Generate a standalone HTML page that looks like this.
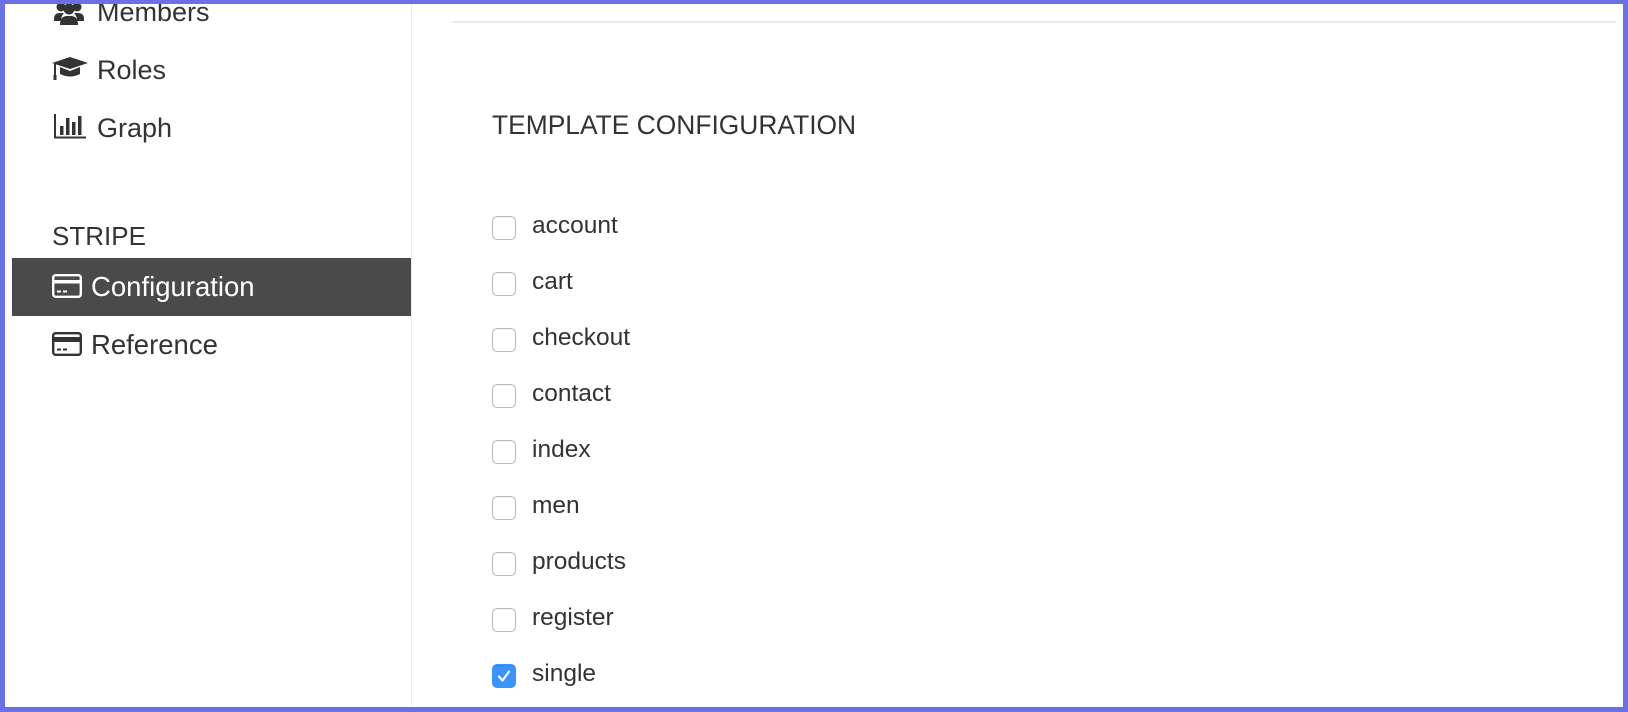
<!DOCTYPE html>
<html><head><meta charset="utf-8"><style>
html,body{margin:0;padding:0;}
body{width:1628px;height:712px;position:relative;overflow:hidden;background:#6a70e6;font-family:"Liberation Sans",Arial,sans-serif;color:#333;}
.page{position:absolute;left:5px;top:4px;right:5px;bottom:5px;background:#fff;overflow:hidden;}
.t{position:absolute;white-space:nowrap;line-height:1;}
.side{position:absolute;left:0;top:0;width:406px;height:100%;border-right:1px solid #ececec;}
.active{position:absolute;left:7px;top:254px;width:399px;height:58px;background:#4a4a4a;}
.cb{position:absolute;left:487px;width:22px;height:22px;border:1px solid #b9b9b9;border-radius:5px;background:#fff;box-shadow:inset 0 1px 1px rgba(0,0,0,.06);}
.cb.on{background:#3b93fb;border-color:#3b93fb;}
.lbl{position:absolute;left:527px;font-size:24.5px;line-height:1;}
</style></head><body>
<div class="page">
<div class="side"></div>
<div class="active"></div>
<svg style="position:absolute;left:49px;top:-3px" width="30" height="24" viewBox="0 0 30 24"><circle cx="7" cy="6" r="4.5" fill="#333"/><circle cx="23" cy="6" r="4.5" fill="#333"/><circle cx="15" cy="8" r="5.5" fill="#333"/><path d="M0 18q0-6 6-6h4q-3 3-3 8H0z" fill="#333"/><path d="M30 18q0-6-6-6h-4q3 3 3 8h7z" fill="#333"/><path d="M6 24q0-9 7-9h4q7 0 7 9z" fill="#333"/></svg>
<svg style="position:absolute;left:47px;top:52px" width="37" height="25" viewBox="0 0 37 25"><path d="M0 7L18 1 36 7 18 13z" fill="#333"/><path d="M8 11v7q10 5 20 0v-7l-10 4z" fill="#333"/><path d="M3 8v12" stroke="#333" stroke-width="2"/><rect x="1.5" y="19" width="3" height="5" fill="#333"/></svg>
<svg style="position:absolute;left:49px;top:110px" width="33" height="25" viewBox="0 0 33 25"><path d="M1 0v23.5h31" stroke="#333" stroke-width="2" fill="none"/><rect x="6" y="12" width="3.5" height="9" fill="#333"/><rect x="12" y="4" width="3.5" height="17" fill="#333"/><rect x="18" y="8" width="3.5" height="13" fill="#333"/><rect x="24" y="2" width="3.5" height="19" fill="#333"/></svg>
<svg style="position:absolute;left:47px;top:270px" width="30" height="24" viewBox="0 0 30 24"><rect x="1.2" y="1.2" width="27.6" height="21.6" rx="2.5" fill="none" stroke="#fff" stroke-width="2.4"/><rect x="1" y="6" width="28" height="3.5" fill="#fff"/><rect x="5" y="16.5" width="4" height="2" fill="#fff"/><rect x="11" y="16.5" width="4" height="2" fill="#fff"/></svg>
<svg style="position:absolute;left:47px;top:328px" width="30" height="24" viewBox="0 0 30 24"><rect x="1.2" y="1.2" width="27.6" height="21.6" rx="2.5" fill="none" stroke="#333" stroke-width="2.4"/><rect x="1" y="5" width="28" height="5" fill="#333"/><rect x="5" y="16.5" width="4" height="2" fill="#333"/><rect x="11" y="16.5" width="4" height="2" fill="#333"/></svg>
<div class="t" style="left:92px;top:-5px;font-size:27px">Members</div>
<div class="t" style="left:92px;top:53px;font-size:27px">Roles</div>
<div class="t" style="left:92px;top:111px;font-size:27px">Graph</div>
<div class="t" style="left:47px;top:219px;font-size:26px">STRIPE</div>
<div class="t" style="left:86px;top:269px;font-size:27.5px;color:#fff">Configuration</div>
<div class="t" style="left:86px;top:327px;font-size:27.5px">Reference</div>
<div style="position:absolute;left:447px;top:17px;width:1164px;height:2px;background:#ececec"></div>
<div class="t" style="left:487px;top:108px;font-size:26.4px">TEMPLATE CONFIGURATION</div>
<div class="cb" style="top:212px"></div><div class="lbl" style="top:210px">account</div>
<div class="cb" style="top:268px"></div><div class="lbl" style="top:266px">cart</div>
<div class="cb" style="top:324px"></div><div class="lbl" style="top:322px">checkout</div>
<div class="cb" style="top:380px"></div><div class="lbl" style="top:378px">contact</div>
<div class="cb" style="top:436px"></div><div class="lbl" style="top:434px">index</div>
<div class="cb" style="top:492px"></div><div class="lbl" style="top:490px">men</div>
<div class="cb" style="top:548px"></div><div class="lbl" style="top:546px">products</div>
<div class="cb" style="top:604px"></div><div class="lbl" style="top:602px">register</div>
<div class="cb on" style="top:660px"><svg width="22" height="22" viewBox="0 0 22 22"><path d="M6 11.5l3.5 4 6.5-9" stroke="#fff" stroke-width="2.2" fill="none" stroke-linecap="round" stroke-linejoin="round"/></svg></div><div class="lbl" style="top:658px">single</div>
</div>
</body></html>
